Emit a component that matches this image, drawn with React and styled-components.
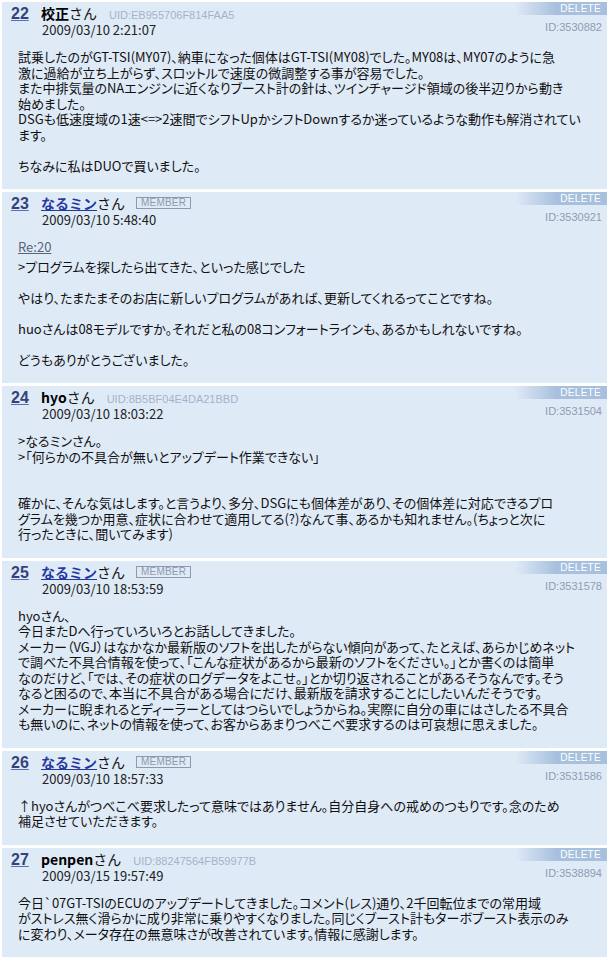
import React from "react";
import styled, { createGlobalStyle } from "styled-components";

const Global = createGlobalStyle`
  body {
    margin: 2px;
    background: #fff;
    font-family: "Noto Sans CJK JP", "Noto Sans", sans-serif;
    color: #111;
  }
`;

const List = styled.div`
  width: 605px;
  display: flex;
  flex-direction: column;
  gap: 3px;
`;

const Panel = styled.div`
  background: #dfeaf7;
  padding-bottom: 16px;
`;

const Head = styled.div`
  display: flex;
  justify-content: space-between;
  align-items: flex-start;
`;

const Who = styled.div`
  padding: 3px 0 0 9px;
`;

const NameRow = styled.div`
  display: flex;
  align-items: baseline;
  height: 16px;
  line-height: 16px;
  white-space: nowrap;
`;

const Num = styled.a`
  font-family: "Liberation Sans", Arial, sans-serif;
  font-weight: bold;
  font-size: 16px;
  color: #34427a;
  text-decoration: underline;
  text-decoration-color: #5a6cc0;
  width: 30px;
`;

const Name = styled.span`
  font-size: 14px;
  font-weight: bold;
  color: #000;
  ${(p) =>
    p.$link &&
    `
    color: #2438a0;
    text-decoration: underline;
  `}
`;

const San = styled.span`
  font-size: 14px;
  color: #111;
`;

const Uid = styled.span`
  font-family: "Liberation Sans", Arial, sans-serif;
  font-size: 11px;
  color: #a3b3c9;
  margin-left: 12px;
`;

const Member = styled.span`
  font-family: "Liberation Sans", Arial, sans-serif;
  font-size: 10px;
  line-height: 10px;
  color: #8d9aab;
  border: 1px solid #8d9aab;
  padding: 0 4px;
  margin-left: 11px;
  letter-spacing: 0.2px;
  align-self: center;
`;

const Date = styled.div`
  font-size: 13px;
  line-height: 18px;
  padding-left: 31px;
  color: #222;
`;

const Side = styled.div`
  display: flex;
  flex-direction: column;
  align-items: flex-end;
`;

const Delete = styled.div`
  width: 92px;
  height: 13px;
  background: linear-gradient(to right, rgba(167, 192, 222, 0) 0%, #a7c0de 45%, #a7c0de 100%);
  color: #fff;
  font-family: "Liberation Sans", Arial, sans-serif;
  font-size: 10px;
  line-height: 13px;
  text-align: right;
  padding-right: 6px;
  box-sizing: border-box;
  letter-spacing: 0.3px;
`;

const Id = styled.div`
  font-family: "Liberation Sans", Arial, sans-serif;
  font-size: 11px;
  color: #8e9db0;
  margin-top: 6px;
  padding-right: 5px;
`;

const Body = styled.div`
  margin-top: 10px;
  padding: 0 6px 0 16px;
  font-size: 13px;
  line-height: 15.5px;
  font-feature-settings: "palt";
  white-space: nowrap;
`;

const Re = styled.a`
  color: #56657a;
  text-decoration: underline;
  display: block;
  margin-bottom: 4px;
`;

const Line = styled.div`
  min-height: 15.5px;
`;

const posts = [
  {
    no: 22,
    name: "校正",
    uid: "UID:EB955706F814FAA5",
    date: "2009/03/10 2:21:07",
    id: "ID:3530882",
    lines: [
      "試乗したのがGT-TSI(MY07)、納車になった個体はGT-TSI(MY08)でした。MY08は、MY07のように急",
      "激に過給が立ち上がらず、スロットルで速度の微調整する事が容易でした。",
      "また中排気量のNAエンジンに近くなりブースト計の針は、ツインチャージド領域の後半辺りから動き",
      "始めました。",
      "DSGも低速度域の1速<=>2速間でシフトUpかシフトDownするか迷っているような動作も解消されてい",
      "ます。",
      "",
      "ちなみに私はDUOで買いました。",
    ],
  },
  {
    no: 23,
    name: "なるミン",
    member: true,
    date: "2009/03/10 5:48:40",
    id: "ID:3530921",
    re: "Re:20",
    lines: [
      ">プログラムを探したら出てきた、といった感じでした",
      "",
      "やはり、たまたまそのお店に新しいプログラムがあれば、更新してくれるってことですね。",
      "",
      "huoさんは08モデルですか。それだと私の08コンフォートラインも、あるかもしれないですね。",
      "",
      "どうもありがとうございました。",
    ],
  },
  {
    no: 24,
    name: "hyo",
    uid: "UID:8B5BF04E4DA21BBD",
    date: "2009/03/10 18:03:22",
    id: "ID:3531504",
    lines: [
      ">なるミンさん。",
      ">「何らかの不具合が無いとアップデート作業できない」",
      "",
      "",
      "確かに、そんな気はします。と言うより、多分、DSGにも個体差があり、その個体差に対応できるプロ",
      "グラムを幾つか用意、症状に合わせて適用してる(?)なんて事、あるかも知れません。(ちょっと次に",
      "行ったときに、聞いてみます)",
    ],
  },
  {
    no: 25,
    name: "なるミン",
    member: true,
    date: "2009/03/10 18:53:59",
    id: "ID:3531578",
    lines: [
      "hyoさん、",
      "今日またDへ行っていろいろとお話ししてきました。",
      "メーカー（VGJ）はなかなか最新版のソフトを出したがらない傾向があって、たとえば、あらかじめネット",
      "で調べた不具合情報を使って、「こんな症状があるから最新のソフトをください。」とか書くのは簡単",
      "なのだけど、「では、その症状のログデータをよこせ。」とか切り返されることがあるそうなんです。そう",
      "なると困るので、本当に不具合がある場合にだけ、最新版を請求することにしたいんだそうです。",
      "メーカーに睨まれるとディーラーとしてはつらいでしょうからね。実際に自分の車にはさしたる不具合",
      "も無いのに、ネットの情報を使って、お客からあまりつべこべ要求するのは可哀想に思えました。",
    ],
  },
  {
    no: 26,
    name: "なるミン",
    member: true,
    date: "2009/03/10 18:57:33",
    id: "ID:3531586",
    lines: [
      "↑hyoさんがつべこべ要求したって意味ではありません。自分自身への戒めのつもりです。念のため",
      "補足させていただきます。",
    ],
  },
  {
    no: 27,
    name: "penpen",
    uid: "UID:88247564FB59977B",
    date: "2009/03/15 19:57:49",
    id: "ID:3538894",
    lines: [
      "今日`07GT-TSIのECUのアップデートしてきました。コメント(レス)通り、2千回転位までの常用域",
      "がストレス無く滑らかに成り非常に乗りやすくなりました。同じくブースト計もターボブースト表示のみ",
      "に変わり、メータ存在の無意味さが改善されています。情報に感謝します。",
    ],
  },
];

const Post = ({ post }) => (
  <Panel>
    <Head>
      <Who>
        <NameRow>
          <Num href="#">{post.no}</Num>
          <Name $link={post.member}>{post.name}</Name>
          <San>さん</San>
          {post.member ? <Member>MEMBER</Member> : <Uid>{post.uid}</Uid>}
        </NameRow>
        <Date>{post.date}</Date>
      </Who>
      <Side>
        <Delete>DELETE</Delete>
        <Id>{post.id}</Id>
      </Side>
    </Head>
    <Body>
      {post.re && <Re href="#">{post.re}</Re>}
      {post.lines.map((l, i) => (
        <Line key={i}>{l}</Line>
      ))}
    </Body>
  </Panel>
);

const App = () => (
  <>
    <Global />
    <List>
      {posts.map((p) => (
        <Post key={p.no} post={p} />
      ))}
    </List>
  </>
);

export default App;
